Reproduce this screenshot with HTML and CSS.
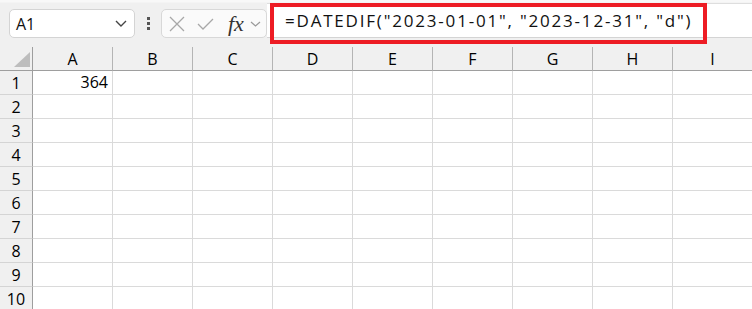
FILE: index.html
```html
<!DOCTYPE html>
<html lang="en">
<head>
  <meta charset="UTF-8" />
  <title>DATEDIF</title>
  <link rel="stylesheet" href="styles.css">
</head>
<body>
  <div class="topbar">
    <div class="namebox">
      <span class="ref">A1</span>
      <svg class="chev" width="12" height="7" viewBox="0 0 12 7"><path d="M1 1 L6 6 L11 1" fill="none" stroke="#444" stroke-width="1.4"/></svg>
    </div>
    <div class="grip"><i></i><i></i><i></i></div>
    <div class="fxbox">
      <svg width="16" height="16" viewBox="0 0 16 16"><path d="M1 1 L15 15 M15 1 L1 15" stroke="#a8a8a8" stroke-width="1.3"/></svg>
      <svg width="17" height="12" viewBox="0 0 17 12"><path d="M1 6 L6 11 L16 1" fill="none" stroke="#a8a8a8" stroke-width="1.3"/></svg>
      <span class="fx">fx</span>
      <svg width="11" height="6" viewBox="0 0 11 6"><path d="M1 1 L5.5 5 L10 1" fill="none" stroke="#999" stroke-width="1.2"/></svg>
    </div>
    <div class="formula">=DATEDIF("2023-01-01", "2023-12-31", "d")</div>
    <div class="highlight"></div>
  </div>

  <div class="sheet">
    <div class="hd corner"><span class="tri"></span></div>
    <div class="hd col">A</div>
    <div class="hd col">B</div>
    <div class="hd col">C</div>
    <div class="hd col">D</div>
    <div class="hd col">E</div>
    <div class="hd col">F</div>
    <div class="hd col">G</div>
    <div class="hd col">H</div>
    <div class="hd col">I</div>

    <div class="rn">1</div><div class="cell num">364</div><div class="cell"></div><div class="cell"></div><div class="cell"></div><div class="cell"></div><div class="cell"></div><div class="cell"></div><div class="cell"></div><div class="cell"></div>
    <div class="rn">2</div><div class="cell"></div><div class="cell"></div><div class="cell"></div><div class="cell"></div><div class="cell"></div><div class="cell"></div><div class="cell"></div><div class="cell"></div><div class="cell"></div>
    <div class="rn">3</div><div class="cell"></div><div class="cell"></div><div class="cell"></div><div class="cell"></div><div class="cell"></div><div class="cell"></div><div class="cell"></div><div class="cell"></div><div class="cell"></div>
    <div class="rn">4</div><div class="cell"></div><div class="cell"></div><div class="cell"></div><div class="cell"></div><div class="cell"></div><div class="cell"></div><div class="cell"></div><div class="cell"></div><div class="cell"></div>
    <div class="rn">5</div><div class="cell"></div><div class="cell"></div><div class="cell"></div><div class="cell"></div><div class="cell"></div><div class="cell"></div><div class="cell"></div><div class="cell"></div><div class="cell"></div>
    <div class="rn">6</div><div class="cell"></div><div class="cell"></div><div class="cell"></div><div class="cell"></div><div class="cell"></div><div class="cell"></div><div class="cell"></div><div class="cell"></div><div class="cell"></div>
    <div class="rn">7</div><div class="cell"></div><div class="cell"></div><div class="cell"></div><div class="cell"></div><div class="cell"></div><div class="cell"></div><div class="cell"></div><div class="cell"></div><div class="cell"></div>
    <div class="rn">8</div><div class="cell"></div><div class="cell"></div><div class="cell"></div><div class="cell"></div><div class="cell"></div><div class="cell"></div><div class="cell"></div><div class="cell"></div><div class="cell"></div>
    <div class="rn">9</div><div class="cell"></div><div class="cell"></div><div class="cell"></div><div class="cell"></div><div class="cell"></div><div class="cell"></div><div class="cell"></div><div class="cell"></div><div class="cell"></div>
    <div class="rn">10</div><div class="cell"></div><div class="cell"></div><div class="cell"></div><div class="cell"></div><div class="cell"></div><div class="cell"></div><div class="cell"></div><div class="cell"></div><div class="cell"></div>
  </div>
</body>
</html>
```

FILE: styles.css
```css
body {
  margin: 0;
  background: #f0f0f0;
  font-family: "Open Sans", "Noto Sans", sans-serif;
  color: #000;
  overflow: hidden;
}

.topbar {
  position: relative;
  height: 47px;
  box-sizing: border-box;
  padding: 9px 0 0 9px;
  display: flex;
  align-items: flex-start;
  background: linear-gradient(#f8f8f8 0, #f8f8f8 2px, #f0f0f0 3px);
}

.namebox {
  width: 126px;
  height: 29px;
  box-sizing: border-box;
  background: #fff;
  border: 1px solid #d4d4d4;
  border-radius: 5px;
  display: flex;
  align-items: center;
  justify-content: space-between;
  padding: 0 7px 0 6px;
}

.ref {
  font-size: 16px;
  color: #111;
}

.grip {
  width: 26px;
  height: 29px;
  display: flex;
  flex-direction: column;
  align-items: center;
  justify-content: center;
  gap: 2px;
}

.grip i {
  width: 3px;
  height: 3px;
  background: #555;
}

.fxbox {
  width: 106px;
  height: 29px;
  box-sizing: border-box;
  background: #fafafa;
  border: 1px solid #d8d8d8;
  border-radius: 5px;
  display: flex;
  align-items: center;
  padding-left: 7px;
}

.fxbox svg:nth-child(2) {
  margin-left: 12px;
}

.fx {
  font-family: "Liberation Serif", "DejaVu Serif", serif;
  font-style: italic;
  font-size: 22px;
  line-height: 22px;
  color: #333;
  margin-left: 14px;
  margin-right: 6px;
}

.formula {
  flex: 1;
  margin-top: -6px;
  height: 35px;
  box-sizing: border-box;
  background: #fff;
  border-top: 1px solid #dedede;
  border-bottom: 1px solid #d4d4d4;
  padding-left: 18px;
  font-size: 17px;
  letter-spacing: 1.8px;
  line-height: 33px;
  color: #111;
  white-space: nowrap;
}

.highlight {
  position: absolute;
  left: 270px;
  top: 3px;
  width: 437px;
  height: 41px;
  box-sizing: border-box;
  border: 4px solid #ed1c24;
}

.sheet {
  display: grid;
  grid-template-columns: 33px repeat(9, 80px);
  grid-auto-rows: 24px;
  font-size: 16px;
}

.hd {
  background: #f0f0f0;
  border-bottom: 1px solid #9e9e9e;
  border-right: 1px solid #b4b4b4;
  box-sizing: border-box;
  display: flex;
  align-items: center;
  justify-content: center;
}

.corner {
  border-right: 1px solid #9e9e9e;
  align-items: flex-end;
  justify-content: flex-end;
  padding: 0 2px 3px 0;
}

.tri {
  width: 16px;
  height: 15px;
  background: #bdbdbd;
  clip-path: polygon(100% 0, 100% 100%, 0 100%);
}

.rn {
  background: #f0f0f0;
  border-right: 1px solid #9e9e9e;
  border-bottom: 1px solid #d4d4d4;
  box-sizing: border-box;
  display: flex;
  align-items: center;
  justify-content: center;
}

.cell {
  background: #fff;
  border-right: 1px solid #dadada;
  border-bottom: 1px solid #dadada;
  box-sizing: border-box;
}

.num {
  text-align: right;
  padding-right: 4px;
  line-height: 23px;
}
```
